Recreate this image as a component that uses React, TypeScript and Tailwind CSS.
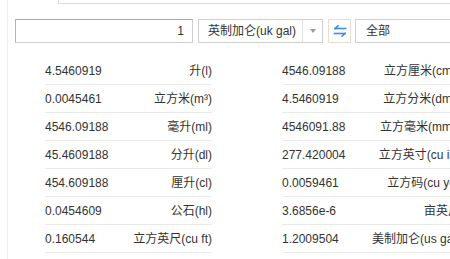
import React from 'react';

const leftRows = [
  { value: '4.5460919', name: '升(l)' },
  { value: '0.0045461', name: '立方米(m³)' },
  { value: '4546.09188', name: '毫升(ml)' },
  { value: '45.4609188', name: '分升(dl)' },
  { value: '454.609188', name: '厘升(cl)' },
  { value: '0.0454609', name: '公石(hl)' },
  { value: '0.160544', name: '立方英尺(cu ft)' },
];

const rightRows = [
  { value: '4546.09188', name: '立方厘米(cm³)' },
  { value: '4.5460919', name: '立方分米(dm³)' },
  { value: '4546091.88', name: '立方毫米(mm³)' },
  { value: '277.420004', name: '立方英寸(cu in)' },
  { value: '0.0059461', name: '立方码(cu yd)' },
  { value: '3.6856e-6', name: '亩英尺' },
  { value: '1.2009504', name: '美制加仑(us gal)' },
];

function Row({ value, name }: { value: string; name: string }) {
  return (
    <div className="h-[28px] flex items-center justify-between border-b border-[#ebebeb] whitespace-nowrap">
      <span>{value}</span>
      <span>{name}</span>
    </div>
  );
}

function SwapIcon() {
  return (
    <svg width="14" height="12" viewBox="0 0 14 12" fill="none" stroke="#3a8ee0" strokeWidth="1.6" strokeLinecap="square">
      {/* top arrow pointing left */}
      <path d="M2 3.5H12.5" />
      <path d="M2 3.5L5 0.8" />
      {/* bottom arrow pointing right */}
      <path d="M1.5 8.5H12" />
      <path d="M12 8.5L9 11.2" />
    </svg>
  );
}

export default function App() {
  return (
    <div
      className="w-[450px] h-[259px] overflow-hidden bg-white text-[12px] text-[#333]"
      style={{ fontFamily: '"Liberation Sans", "Noto Sans CJK SC", sans-serif' }}
    >
      <div className="ml-[7px] h-full border-l border-[#ececec]">
        {/* top box edge */}
        <div className="ml-[50px] h-[4px] border-l border-b border-[#dcdcdc]" />

        {/* Controls */}
        <div className="mt-[15px] pl-[7px] flex items-center whitespace-nowrap">
          <div className="shrink-0 w-[178px] h-[24px] border border-[#cfcfcf] border-t-[#a8a8a8] border-l-[#b4b4b4] flex items-center justify-end pr-[8px]">
            1
          </div>
          <div className="shrink-0 ml-[5px] w-[125px] h-[24px] border border-[#d0d0d0] flex items-center">
            <span className="flex-1 pl-[9px]">英制加仑(uk gal)</span>
            <span className="w-[20px] h-full border-l border-[#e2e2e2] flex items-center justify-center">
              <span className="w-0 h-0 border-l-[3px] border-r-[3px] border-t-[4px] border-l-transparent border-r-transparent border-t-[#9a9a9a]" />
            </span>
          </div>
          <div className="shrink-0 ml-[5px] w-[23px] h-[24px] border border-[#e8ddd2] flex items-center justify-center">
            <SwapIcon />
          </div>
          <div className="shrink-0 ml-[4px] w-[120px] h-[24px] border border-[#d0d0d0] flex items-center pl-[10px]">
            全部
          </div>
        </div>

        {/* Results */}
        <div className="mt-[14px] ml-[37px] flex">
          <div className="w-[167px] shrink-0">
            {leftRows.map((r) => (
              <Row key={r.name} value={r.value} name={r.name} />
            ))}
          </div>
          <div className="ml-[70px] w-[178px] shrink-0">
            {rightRows.map((r) => (
              <Row key={r.name} value={r.value} name={r.name} />
            ))}
          </div>
        </div>
      </div>
    </div>
  );
}
